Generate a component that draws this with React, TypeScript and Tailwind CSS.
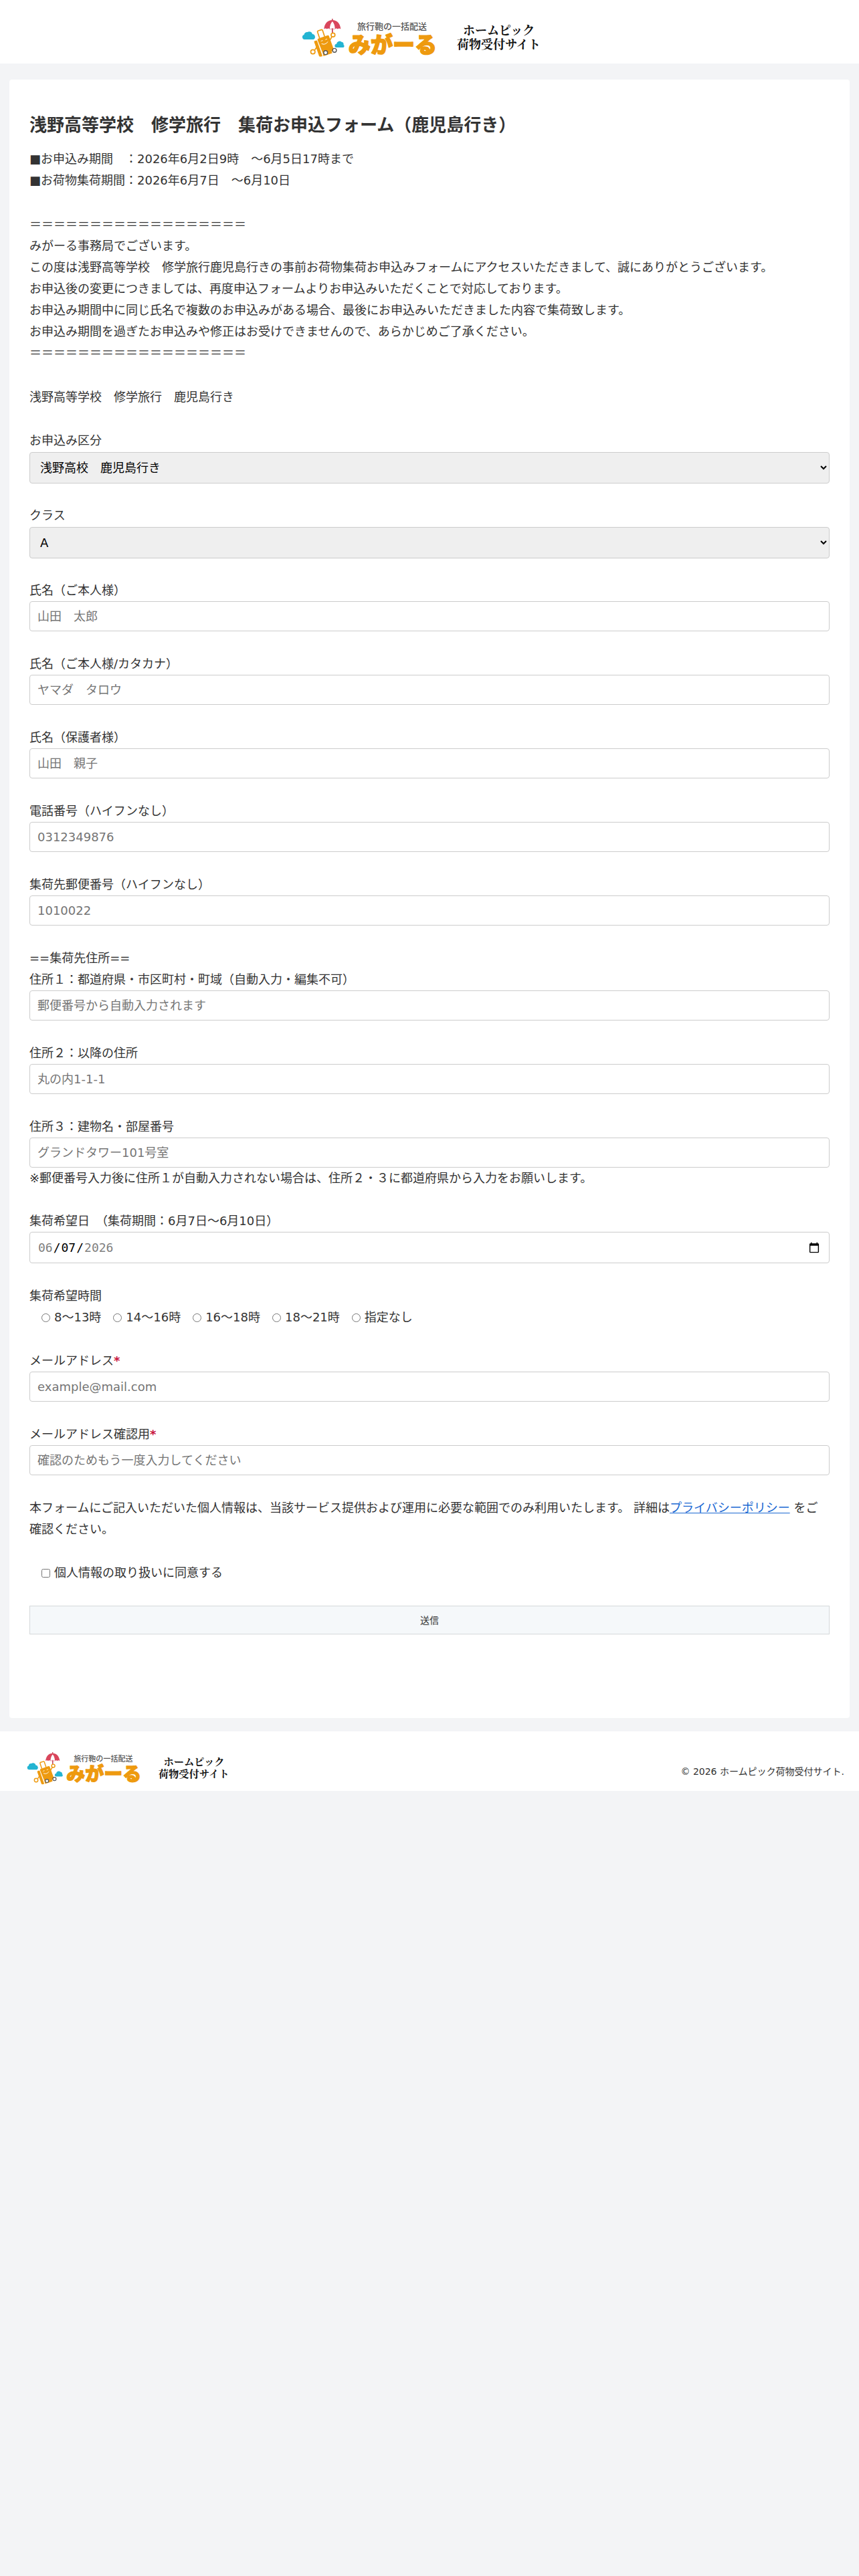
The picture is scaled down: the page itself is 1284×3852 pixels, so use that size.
import type { ReactNode } from "react";

const ORANGE = "#ee9a0f";
const GOTHIC = "'Noto Sans CJK JP', sans-serif";
const MINCHO = "'Noto Serif CJK JP', 'Noto Serif JP', 'Noto Sans CJK JP', serif";

function Logo({ className }: { className: string }) {
  return (
    <svg viewBox="0 0 384 68" className={className} role="img" aria-label="みがーる ホームピック荷物受付サイト">
      <g fill="#23b4d2">
        <path d="M5 32a3.600 3.600 0 0 1-.5-7a4.500 4.500 0 0 1 5-4a5 5 0 0 1 7.500 3a4.200 4.200 0 0 1 1.500 8z" />
        <path d="M53 44a2.600 2.600 0 0 1 0-5.200a4.500 4.500 0 0 1 7.500-3a3.600 3.600 0 0 1 3 4.200a2.200 2.200 0 0 1-.5 4z" />
      </g>
      <path d="M46.800 1v22" stroke="#c23a4f" strokeWidth="1.400" />
      <path d="M34.300 16.500C35 8 40 3 46.800 3S58.600 8 59.300 16.500q-2.500-2-4.500 0q-2-2-4 0h-8q-2-2-4 0q-2-2-4.500 0z" fill="#d9465c" />
      <path d="M42.800 16.500q.5-8 4-11.500q3.500 3.500 4 11.500q-2-1.500-4 0q-2-1.500-4 0z" fill="#fff" />
      <path d="M46.800 15v8" stroke="#c23a4f" strokeWidth="1.200" />
      <g fill="none" stroke={ORANGE} strokeWidth="1.700" strokeLinecap="round" strokeLinejoin="round">
        <path d="M27.500 29.500l-2.800-8.500q-.5-1.500 1-2l4.500-1.400q1.500-.5 2 1l2.800 8.500" />
        <circle cx="47.800" cy="25.300" r="2.900" />
        <circle cx="17.700" cy="50.500" r="3.200" />
        <path d="M46 28l-2.500 4.500M21 47l2-3" />
      </g>
      <path d="M24.700 33q-.6-2 1.300-2.600l13.300-4.500q2-.6 2.600 1.300l6.800 19q.6 2-1.300 2.700l-13.500 4.600q-1 .3-1.600-1.300z" fill={ORANGE} />
      <path d="M19.500 35.500q.5-2 4.300-2l8.200 23.500q-4 1.600-5 0z" fill={ORANGE} />
      <path d="M32.500 53l13-4.500l1 4l-13 4.500z" fill={ORANGE} />
      <g fill="none" stroke="#fff" strokeWidth="1" strokeLinecap="round">
        <path d="M30 34.500q.6-1.200 2-.8M36.500 32.300q.6-1.200 2-.8M31 38.500q4.500 2.500 9-2.800" />
      </g>
      <g fill="#fff" stroke="#555" strokeWidth="1.400">
        <circle cx="36.700" cy="51.700" r="2.900" />
        <circle cx="50" cy="48.300" r="2.900" />
      </g>
      <text x="84" y="17" fontFamily={GOTHIC} fontSize="13" fontWeight="500" fill="#555">旅行鞄の一括配送</text>
      <text x="71" y="52" fontFamily={GOTHIC} fontSize="33" fontWeight="900" fill={ORANGE} stroke={ORANGE} strokeWidth="1.500" strokeLinejoin="round">みがーる</text>
      <g fontFamily={MINCHO} fontSize="18" fontWeight="700" fill="#111">
        <text x="242" y="25">ホームピック</text>
        <text x="233" y="46">荷物受付サイト</text>
      </g>
    </svg>
  );
}

const inputBox =
  "block h-[45px] w-full rounded border border-[#ccc] bg-white px-[11px] text-lg text-black placeholder:text-[#757575]";

function Label({ htmlFor, required, children }: { htmlFor: string; required?: boolean; children: ReactNode }) {
  return (
    <label htmlFor={htmlFor} className="block">
      {children}
      {required && <span className="font-bold text-[#c7143c]">*</span>}
    </label>
  );
}

type TextFieldProps = { id: string; label: string; placeholder: string; type?: string; required?: boolean };

function TextField({ id, label, placeholder, type = "text", required }: TextFieldProps) {
  return (
    <div>
      <Label htmlFor={id} required={required}>{label}</Label>
      <input id={id} name={id} type={type} placeholder={placeholder} className={inputBox} />
    </div>
  );
}

function SelectField({ id, label, options }: { id: string; label: string; options: string[] }) {
  return (
    <div>
      <Label htmlFor={id}>{label}</Label>
      <select
        id={id}
        name={id}
        className="mt-px block h-[47px] w-full rounded border border-[#ccc] bg-[#efefef] px-[11px] text-lg text-black"
      >
        {options.map((o) => (
          <option key={o}>{o}</option>
        ))}
      </select>
    </div>
  );
}

const times = ["8～13時", "14～16時", "16～18時", "18～21時", "指定なし"];

export default function App() {
  return (
    <div
      lang="ja"
      className="min-h-screen bg-[#f3f4f6] font-['DejaVu_Sans','Noto_Sans_CJK_JP',sans-serif] text-lg leading-8 text-[#333]"
    >
      <header className="flex h-[95px] justify-center bg-white pt-[27px]">
        <a href="#" className="block">
          <Logo className="h-[68px] w-[384px]" />
        </a>
      </header>

      <main className="mx-3.5 mt-6 rounded bg-white px-[30px] pt-12 pb-[125px]">
        <h1 className="text-[26px] leading-10 font-bold">浅野高等学校　修学旅行　集荷お申込フォーム（鹿児島行き）</h1>

        <div className="mt-[15px] flex flex-col gap-[34px]">
          <p>
            ■お申込み期間　：2026年6月2日9時　～6月5日17時まで
            <br />
            ■お荷物集荷期間：2026年6月7日　～6月10日
          </p>
          <p>
            ＝＝＝＝＝＝＝＝＝＝＝＝＝＝＝＝＝＝
            <br />
            みがーる事務局でございます。
            <br />
            この度は浅野高等学校　修学旅行鹿児島行きの事前お荷物集荷お申込みフォームにアクセスいただきまして、誠にありがとうございます。
            <br />
            お申込後の変更につきましては、再度申込フォームよりお申込みいただくことで対応しております。
            <br />
            お申込み期間中に同じ氏名で複数のお申込みがある場合、最後にお申込みいただきました内容で集荷致します。
            <br />
            お申込み期間を過ぎたお申込みや修正はお受けできませんので、あらかじめご了承ください。
            <br />
            ＝＝＝＝＝＝＝＝＝＝＝＝＝＝＝＝＝＝
          </p>
          <p>浅野高等学校　修学旅行　鹿児島行き</p>
        </div>

        <form className="mt-[33px]">
          <div className="flex flex-col gap-8">
            <SelectField id="category" label="お申込み区分" options={["浅野高校　鹿児島行き"]} />
            <SelectField id="class" label="クラス" options={["A", "B", "C", "D", "E", "F"]} />
          </div>

          <div className="mt-8 flex flex-col gap-[33px]">
            <TextField id="name" label="氏名（ご本人様）" placeholder="山田　太郎" />
            <TextField id="kana" label="氏名（ご本人様/カタカナ）" placeholder="ヤマダ　タロウ" />
            <TextField id="guardian" label="氏名（保護者様）" placeholder="山田　親子" />
            <TextField id="tel" label="電話番号（ハイフンなし）" placeholder="0312349876" type="tel" />
            <TextField id="zip" label="集荷先郵便番号（ハイフンなし）" placeholder="1010022" />
            <div>
              <p>==集荷先住所==</p>
              <TextField
                id="address1"
                label="住所１：都道府県・市区町村・町域（自動入力・編集不可）"
                placeholder="郵便番号から自動入力されます"
              />
            </div>
            <TextField id="address2" label="住所２：以降の住所" placeholder="丸の内1-1-1" />
            <div>
              <TextField id="address3" label="住所３：建物名・部屋番号" placeholder="グランドタワー101号室" />
              <p>※郵便番号入力後に住所１が自動入力されない場合は、住所２・３に都道府県から入力をお願いします。</p>
            </div>
          </div>

          <div className="mt-8 flex flex-col gap-[33px]">
            <div>
              <Label htmlFor="date">集荷希望日　（集荷期間：6月7日～6月10日）</Label>
              <input
                id="date"
                name="date"
                type="date"
                defaultValue="2026-06-07"
                min="2026-06-07"
                max="2026-06-10"
                className="block h-[47px] w-full rounded border border-[#ccc] bg-white px-[11px] font-['DejaVu_Sans_Mono',monospace] text-lg text-black"
              />
            </div>
            <fieldset>
              <legend>集荷希望時間</legend>
              <div className="flex flex-wrap">
                {times.map((t) => (
                  <label key={t} className="ml-[18px] flex items-center gap-1.5">
                    <input type="radio" name="time" value={t} className="size-[13px]" />
                    {t}
                  </label>
                ))}
              </div>
            </fieldset>
          </div>

          <div className="mt-[33px] flex flex-col gap-[33px]">
            <TextField id="email" label="メールアドレス" placeholder="example@mail.com" type="email" required />
            <TextField
              id="email-confirm"
              label="メールアドレス確認用"
              placeholder="確認のためもう一度入力してください"
              type="email"
              required
            />
            <p>
              本フォームにご記入いただいた個人情報は、当該サービス提供および運用に必要な範囲でのみ利用いたします。 詳細は
              <a href="#" className="text-[#1967d2] underline">プライバシーポリシー</a> をご確認ください。
            </p>
            <label className="ml-[18px] flex items-center gap-1.5 self-start">
              <input type="checkbox" name="agree" className="size-[13px]" />
              個人情報の取り扱いに同意する
            </label>
            <button
              type="submit"
              className="h-[43px] w-full border border-[#d5d9db] bg-[#f5f8fa] text-sm text-[#333]"
            >
              送信
            </button>
          </div>
        </form>
      </main>

      <footer className="mt-5 flex h-[89px] items-start justify-between bg-white pr-[22px] pl-[39px]">
        <a href="#" className="mt-[30px] block">
          <Logo className="h-[58px] w-[326px]" />
        </a>
        <small className="mt-11 text-sm leading-8">© 2026 ホームピック荷物受付サイト.</small>
      </footer>
    </div>
  );
}
